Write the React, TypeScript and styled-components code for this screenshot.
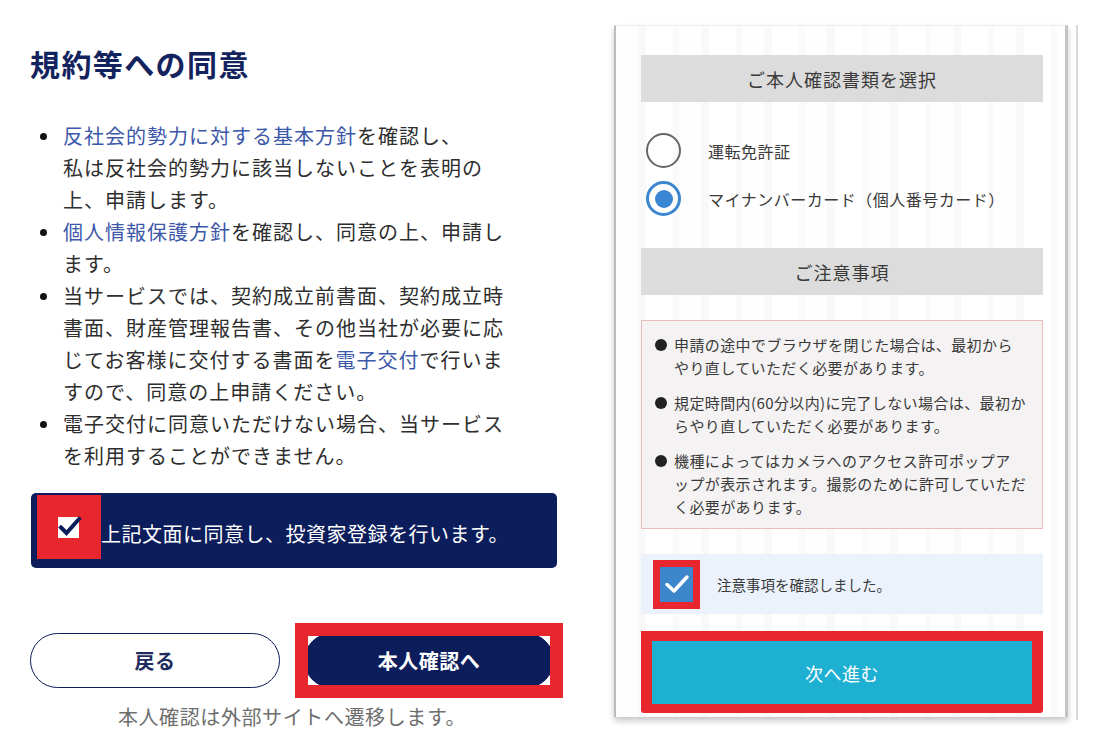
import styled, { createGlobalStyle } from 'styled-components';

// Two screens side by side: the consent step (left) and the identity-document step (right)

const navy = '#0c1d5b';
const red = '#e8262d';
const jp = `"Noto Sans CJK JP", "Noto Sans", sans-serif`;

const GlobalStyle = createGlobalStyle`
  html, body {
    margin: 0;
    padding: 0;
    background: #ffffff;
  }
  body {
    font-family: ${jp};
    color: #333333;
  }
`;

const Page = styled.div`
  display: flex;
  width: 1095px;
  height: 754px;
  overflow: hidden;
`;

// ── Left: consent ──────────────────────────

const ConsentColumn = styled.section`
  width: 614px;
  flex-shrink: 0;
  padding: 43px 0 0 30px;
  box-sizing: border-box;
  display: flex;
  flex-direction: column;
`;

const Title = styled.h1`
  margin: 0;
  font-size: 30px;
  line-height: 40px;
  font-weight: 700;
  letter-spacing: 1.4px;
  color: #13235e;
`;

const TermsList = styled.ul`
  list-style: none;
  margin: 37px 0 0 10px;
  padding: 0;
`;

const TermsItem = styled.li`
  display: flex;
  gap: 16px;
  font-size: 20px;
  line-height: 32px;
  letter-spacing: 1px;
  color: #2e2e2e;
`;

const Dot = styled.span`
  flex-shrink: 0;
  width: 7px;
  height: 7px;
  margin-top: 13px;
  border-radius: 50%;
  background: #111111;
`;

const TermsText = styled.span`
  width: 450px;
`;

const Link = styled.a`
  color: #3d58a8;
  text-decoration: none;
`;

const AgreeBanner = styled.label`
  margin: 21px 0 0 1px;
  width: 526px;
  height: 75px;
  border-radius: 5px;
  background: ${navy};
  display: flex;
  align-items: flex-start;
  box-sizing: border-box;
  padding-left: 6px;
`;

const RedSquare = styled.span`
  width: 64px;
  height: 64px;
  margin-top: 2px;
  background: ${red};
  display: flex;
  align-items: center;
  justify-content: center;
  flex-shrink: 0;
`;

const AgreeText = styled.span`
  align-self: center;
  padding-top: 5px;
  font-size: 20px;
  letter-spacing: 0.5px;
  color: #ffffff;
`;

const ButtonRow = styled.div`
  display: flex;
  gap: 24px;
  margin-top: 65px;
`;

const PillButton = styled.button<{ $primary?: boolean }>`
  width: 250px;
  height: 55px;
  border-radius: 28px;
  box-sizing: border-box;
  border: 1.5px solid ${navy};
  background: ${(p) => (p.$primary ? navy : '#ffffff')};
  color: ${(p) => (p.$primary ? '#ffffff' : '#1d2b5e')};
  font-family: ${jp};
  font-size: 20px;
  font-weight: 700;
  letter-spacing: 0.5px;
  cursor: pointer;
`;

const Highlight = styled.div`
  position: relative;
  display: flex;
`;

const RedFrame = styled.span<{ $w: number }>`
  position: absolute;
  inset: -10px -9px -10px -9px;
  border: ${(p) => p.$w}px solid ${red};
  pointer-events: none;
`;

const Caption = styled.p`
  margin: 16px 0 0 0;
  width: 524px;
  text-align: center;
  font-size: 20px;
  line-height: 26px;
  letter-spacing: 0.6px;
  color: #6e6e6e;
`;

// ── Right: document select (phone screen) ──

const PhoneCard = styled.section`
  margin-top: 25px;
  width: 454px;
  height: 692px;
  flex-shrink: 0;
  box-sizing: border-box;
  border-left: 2px solid #bdbdbd;
  border-right: 3px solid #c4c4c4;
  border-top: 1px solid #eeeeee;
  box-shadow: 0 4px 6px rgba(0, 0, 0, 0.22);
  background:
    repeating-linear-gradient(90deg, #fefefe 0 22px, #f9f9f9 22px 30px, #ffffff 30px 57px, #fafafa 57px 63px);
  padding: 29px 22px 0 25px;
  display: flex;
  flex-direction: column;
  font-family: ${jp};
`;

const EdgeLine = styled.div`
  margin: 25px 0 0 8px;
  width: 2px;
  height: 695px;
  background: #d8d8d8;
`;

const SectionHeader = styled.h2`
  margin: 0;
  height: 47px;
  background: #dcdcdc;
  display: flex;
  align-items: center;
  justify-content: center;
  font-size: 18px;
  font-weight: 400;
  letter-spacing: 1px;
  color: #3a3a3a;
`;

const RadioGroup = styled.div`
  display: flex;
  flex-direction: column;
  gap: 13px;
  padding: 31px 0 32px 5px;
`;

const RadioRow = styled.label`
  display: flex;
  align-items: center;
  gap: 27px;
  font-size: 16px;
  letter-spacing: 0.5px;
  color: #3a3a3a;
`;

const RadioCircle = styled.span<{ $checked?: boolean }>`
  width: 35px;
  height: 35px;
  box-sizing: border-box;
  border-radius: 50%;
  border: ${(p) => (p.$checked ? '3px solid #3b87cf' : '2px solid #666666')};
  display: flex;
  align-items: center;
  justify-content: center;
  &::after {
    content: '';
    width: 18px;
    height: 18px;
    border-radius: 50%;
    background: ${(p) => (p.$checked ? '#3a86d2' : 'transparent')};
  }
`;

const NoticeBox = styled.ul`
  list-style: none;
  margin: 25px 0 0 0;
  padding: 12px 0 10px 13px;
  border: 1px solid #ebbcbc;
  background: #f4f2f2;
  display: flex;
  flex-direction: column;
  gap: 12px;
`;

const NoticeItem = styled.li`
  display: flex;
  gap: 7px;
  font-size: 15px;
  line-height: 23px;
  letter-spacing: 0.4px;
  color: #3a3a3a;
  white-space: nowrap;
`;

const BigDot = styled.span`
  flex-shrink: 0;
  width: 12px;
  height: 12px;
  margin-top: 6px;
  border-radius: 50%;
  background: #222222;
`;

const ConfirmRow = styled.label`
  margin-top: 25px;
  height: 60px;
  background: #ebf2fc;
  display: flex;
  align-items: center;
  padding-left: 12px;
  gap: 17px;
  font-size: 14.5px;
  color: #3a3a3a;
`;

const CheckFrame = styled.span`
  width: 47px;
  height: 49px;
  box-sizing: border-box;
  border: 7px solid ${red};
  background: #3c86cc;
  display: flex;
  align-items: center;
  justify-content: center;
`;

const NextWrap = styled.div`
  margin-top: 17px;
  height: 82px;
  box-sizing: border-box;
  border: 10px solid ${red};
  border-left-width: 11px;
  border-right-width: 11px;
  border-bottom-width: 9px;
  border-radius: 0 0 3px 3px;
  display: flex;
`;

const NextButton = styled.button`
  flex: 1;
  border: none;
  background: #1eb0d2;
  color: #ffffff;
  font-family: ${jp};
  font-size: 18px;
  letter-spacing: 0.5px;
  cursor: pointer;
`;

function NavyCheck() {
  return (
    <svg width="26" height="26" viewBox="0 0 26 26">
      <rect x="2" y="3" width="21" height="21" fill="#ffffff" />
      <path d="M5 13.5 L10.5 19 L23 5" fill="none" stroke={navy} strokeWidth="4" strokeLinecap="square" />
    </svg>
  );
}

function WhiteCheck() {
  return (
    <svg width="26" height="22" viewBox="0 0 26 22">
      <path d="M3 11.5 L10 18 L23 4" fill="none" stroke="#ffffff" strokeWidth="3.5" strokeLinecap="round" strokeLinejoin="round" />
    </svg>
  );
}

export default function App() {
  return (
    <>
      <GlobalStyle />
      <Page>
        <ConsentColumn>
          <Title>規約等への同意</Title>
          <TermsList>
            <TermsItem>
              <Dot />
              <TermsText>
                <Link href="#">反社会的勢力に対する基本方針</Link>を確認し、
                <br />
                私は反社会的勢力に該当しないことを表明の上、申請します。
              </TermsText>
            </TermsItem>
            <TermsItem>
              <Dot />
              <TermsText>
                <Link href="#">個人情報保護方針</Link>を確認し、同意の上、申請します。
              </TermsText>
            </TermsItem>
            <TermsItem>
              <Dot />
              <TermsText>
                当サービスでは、契約成立前書面、契約成立時書面、財産管理報告書、その他当社が必要に応じてお客様に交付する書面を
                <Link href="#">電子交付</Link>で行いますので、同意の上申請ください。
              </TermsText>
            </TermsItem>
            <TermsItem>
              <Dot />
              <TermsText>電子交付に同意いただけない場合、当サービスを利用することができません。</TermsText>
            </TermsItem>
          </TermsList>

          <AgreeBanner>
            <RedSquare>
              <NavyCheck />
            </RedSquare>
            <AgreeText>上記文面に同意し、投資家登録を行います。</AgreeText>
          </AgreeBanner>

          <ButtonRow>
            <PillButton>戻る</PillButton>
            <Highlight>
              <PillButton $primary>本人確認へ</PillButton>
              <RedFrame $w={13} />
            </Highlight>
          </ButtonRow>
          <Caption>本人確認は外部サイトへ遷移します。</Caption>
        </ConsentColumn>

        <PhoneCard>
          <SectionHeader>ご本人確認書類を選択</SectionHeader>
          <RadioGroup>
            <RadioRow>
              <RadioCircle />
              運転免許証
            </RadioRow>
            <RadioRow>
              <RadioCircle $checked />
              マイナンバーカード（個人番号カード）
            </RadioRow>
          </RadioGroup>

          <SectionHeader>ご注意事項</SectionHeader>
          <NoticeBox>
            <NoticeItem>
              <BigDot />
              <span>
                申請の途中でブラウザを閉じた場合は、最初から
                <br />
                やり直していただく必要があります。
              </span>
            </NoticeItem>
            <NoticeItem>
              <BigDot />
              <span>
                規定時間内(60分以内)に完了しない場合は、最初か
                <br />
                らやり直していただく必要があります。
              </span>
            </NoticeItem>
            <NoticeItem>
              <BigDot />
              <span>
                機種によってはカメラへのアクセス許可ポップア
                <br />
                ップが表示されます。撮影のために許可していただ
                <br />
                く必要があります。
              </span>
            </NoticeItem>
          </NoticeBox>

          <ConfirmRow>
            <CheckFrame>
              <WhiteCheck />
            </CheckFrame>
            注意事項を確認しました。
          </ConfirmRow>

          <NextWrap>
            <NextButton>次へ進む</NextButton>
          </NextWrap>
        </PhoneCard>
        <EdgeLine />
      </Page>
    </>
  );
}
